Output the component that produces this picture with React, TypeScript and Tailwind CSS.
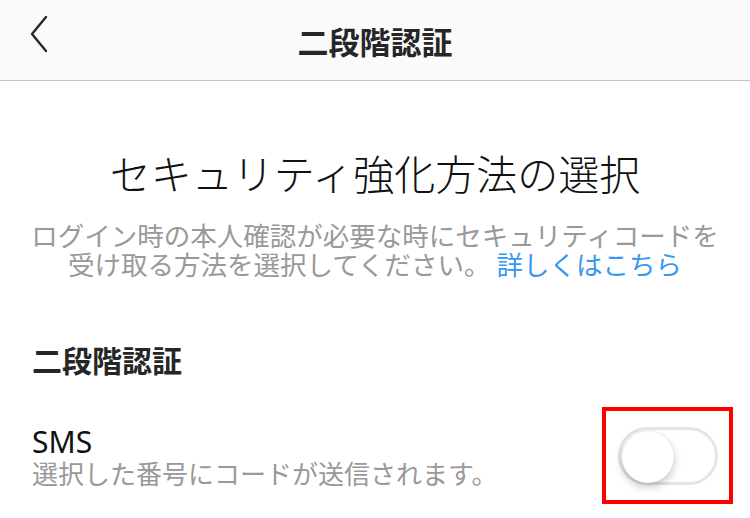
const FONT = '"Noto Sans CJK JP", "Noto Sans", sans-serif'

function Toggle() {
  return (
    <div className="relative h-[58px] w-[100px] rounded-full border-[3px] border-[#e5e5e5] bg-white">
      <div className="absolute top-[1px] left-[1px] h-[52px] w-[52px] rounded-full bg-white shadow-[0_4px_8px_rgba(0,0,0,0.22),0_0_1px_rgba(0,0,0,0.2)]" />
    </div>
  )
}

export default function App() {
  return (
    <div className="h-[518px] w-[750px] overflow-hidden bg-white text-[#262626]" style={{ fontFamily: FONT }}>
      <header className="relative flex h-[81px] items-center justify-center border-b border-[#c4c4c4] bg-[#fafafa]">
        <button type="button" aria-label="戻る" className="absolute top-[14px] left-[26px]">
          <svg width="26" height="40" viewBox="0 0 26 40" fill="none">
            <path d="M20 3 L6 20 L20 37" stroke="#262626" strokeWidth="2.4" strokeLinecap="round" strokeLinejoin="round" />
          </svg>
        </button>
        <h1 className="text-[31px] leading-none font-bold">二段階認証</h1>
      </header>

      <section className="px-[20px] pt-[64px] text-center">
        <h2 className="text-[41px] leading-[54px] font-light text-[#111]">セキュリティ強化方法の選択</h2>
        <p className="mt-[21px] text-[26.5px] leading-[29px] text-[#999]">
          ログイン時の本人確認が必要な時にセキュリティコードを
          <br />
          受け取る方法を選択してください。 <span className="text-[#3897f0]">詳しくはこちら</span>
        </p>
      </section>

      <section className="px-[32px] pt-[61px]">
        <h3 className="text-[30px] leading-[40px] font-bold">二段階認証</h3>
        <div className="mt-[28px] flex items-center justify-between">
          <div>
            <div className="text-[30px] leading-[34px] text-[#111]" style={{ fontFamily: '"Noto Sans", "Noto Sans CJK JP", sans-serif' }}>SMS</div>
            <div className="text-[26px] leading-[28px] text-[#999]">選択した番号にコードが送信されます。</div>
          </div>
          <div className="mr-[-15px] flex h-[97px] w-[131px] items-center justify-center border-4 border-[#ff0000]">
            <Toggle />
          </div>
        </div>
      </section>
    </div>
  )
}
